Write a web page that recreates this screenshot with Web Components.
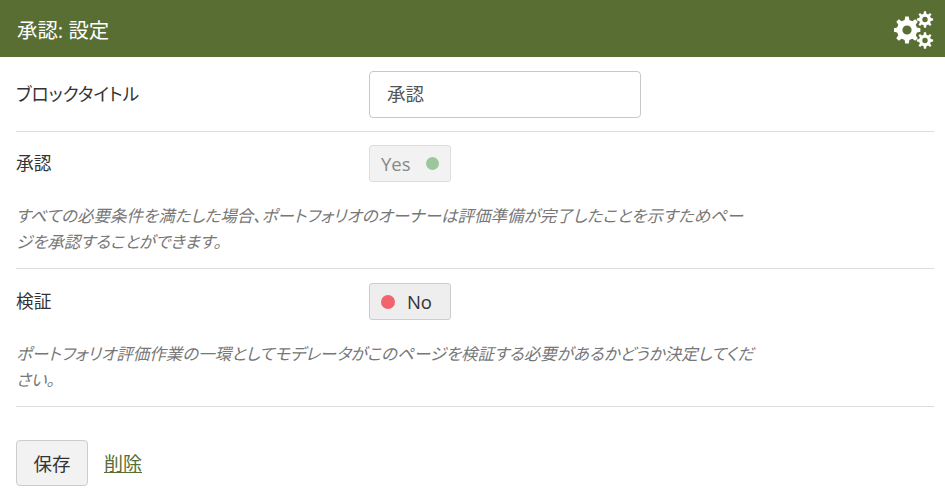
<!DOCTYPE html>
<html lang="ja"><head><meta charset="utf-8"><title>承認: 設定</title>
<style>
html,body{margin:0;padding:0;background:#fff}
body{font-family:"Open Sans","Noto Sans CJK JP",sans-serif;color:#333;width:945px;height:498px;overflow:hidden;font-feature-settings:"palt"}
</style></head><body>
<config-panel>
  <span slot="title">承認: 設定</span>
  <form-row label="ブロックタイトル" kind="roomy"><text-box value="承認"></text-box></form-row>
  <form-row label="承認" desc="すべての必要条件を満たした場合、ポートフォリオのオーナーは評価準備が完了したことを示すためページを承認することができます。"><switch-box state="yes"></switch-box></form-row>
  <form-row label="検証" kind="roomy" desc="ポートフォリオ評価作業の一環としてモデレータがこのページを検証する必要があるかどうか決定してください。"><switch-box state="no"></switch-box></form-row>
  <action-bar slot="actions"></action-bar>
</config-panel>
<script>
function gear(cx,cy,R,r,hole,n){
  let d='';const st=Math.PI*2/n;
  for(let i=0;i<n;i++){const a=i*st-Math.PI/2;
    const p=[[a-st*.3,r],[a-st*.17,R],[a+st*.17,R],[a+st*.3,r]];
    p.forEach((q,j)=>{d+=(i===0&&j===0?'M':'L')+(cx+q[1]*Math.cos(q[0])).toFixed(2)+' '+(cy+q[1]*Math.sin(q[0])).toFixed(2)});
  }
  d+='Z M'+(cx+hole)+' '+cy+'A'+hole+' '+hole+' 0 1 0 '+(cx-hole)+' '+cy+'A'+hole+' '+hole+' 0 1 0 '+(cx+hole)+' '+cy+'Z';
  return d;
}
class ConfigPanel extends HTMLElement{constructor(){super();this.attachShadow({mode:'open'}).innerHTML=`<style>
:host{display:block}
header{background:#586e33;color:#fff;height:57px;display:flex;align-items:center;justify-content:space-between;padding:0 11px 0 17px;font-size:20.4px;box-sizing:border-box}
svg{display:block;width:40px;height:40px;margin-top:1px}
main{padding:0 11px 0 16px}
</style><header><div><slot name="title"></slot></div>
<svg viewBox="0 0 40 40"><path fill="#fff" fill-rule="evenodd" d="${gear(13,21,13.5,10.2,4.6,8)+gear(31,10.5,8.2,6,2.7,8)+gear(31,31.5,8.2,6,2.7,8)}"/></svg></header>
<main><slot></slot></main><slot name="actions"></slot>`}}
class FormRow extends HTMLElement{constructor(){super();this.attachShadow({mode:'open'}).innerHTML=`<style>
:host{display:block;border-bottom:1px solid #ddd;padding:13px 0 13px}
:host([kind=roomy]){padding:14px 0 13px}
.top{display:grid;grid-template-columns:353px 1fr;align-items:center}
.lab{font-size:17.7px;color:#333;margin-top:-4px}
p{margin:21px 0 0;width:739px;font-size:16.5px;line-height:26px;font-style:italic;color:#777;line-break:loose}
</style><div class="top"><div class="lab"></div><div><slot></slot></div></div><p></p>`}
connectedCallback(){const s=this.shadowRoot;s.querySelector('.lab').textContent=this.getAttribute('label');
const p=s.querySelector('p');const d=this.getAttribute('desc');if(d)p.textContent=d;else p.remove()}}
class TextBox extends HTMLElement{constructor(){super();this.attachShadow({mode:'open'}).innerHTML=`<style>
:host{display:block;width:272px;height:47px;box-sizing:border-box;border:1px solid #c8c8c8;border-radius:4px;padding:0 17px;font-size:18.5px;line-height:44px;color:#555;background:#fff}
</style><span></span>`}
connectedCallback(){this.shadowRoot.querySelector('span').textContent=this.getAttribute('value')}}
class SwitchBox extends HTMLElement{constructor(){super();this.attachShadow({mode:'open'}).innerHTML=`<style>
:host{display:flex;width:82px;height:37px;box-sizing:border-box;border:1px solid #ddd;border-radius:3px;background:#f2f2f2;align-items:center;font-size:18.5px;color:#888;justify-content:space-between;padding:0 11px}
:host([state=no]){background:#eee;border-color:#ccc;color:#333;justify-content:flex-start;gap:12px;padding:0 18px 0 11px}
i{width:13px;height:13px;border-radius:50%;background:#9cc79c;display:block}
:host([state=no]) i{background:#f0646e;width:14px;height:14px}
</style><span></span>`}
connectedCallback(){const y=this.getAttribute('state')==='yes';const r=this.shadowRoot;
const t=r.querySelector('span');t.textContent=y?'Yes':'No';const i=document.createElement('i');
if(y)r.append(i);else r.insertBefore(i,t)}}
class ActionBar extends HTMLElement{constructor(){super();this.attachShadow({mode:'open'}).innerHTML=`<style>
:host{display:flex;align-items:center;gap:16px;padding:33px 16px 0}
button{font:inherit;font-size:18.5px;width:72px;height:46px;box-sizing:border-box;background:#f2f2f2;color:#333;border:1px solid #ccc;border-radius:4px;padding:0}
a{color:#586e33;font-size:19px;text-decoration:underline}
</style><button type="button">保存</button><a href="#">削除</a>`}}
customElements.define('config-panel',ConfigPanel);
customElements.define('form-row',FormRow);
customElements.define('text-box',TextBox);
customElements.define('switch-box',SwitchBox);
customElements.define('action-bar',ActionBar);
</script></body></html>
